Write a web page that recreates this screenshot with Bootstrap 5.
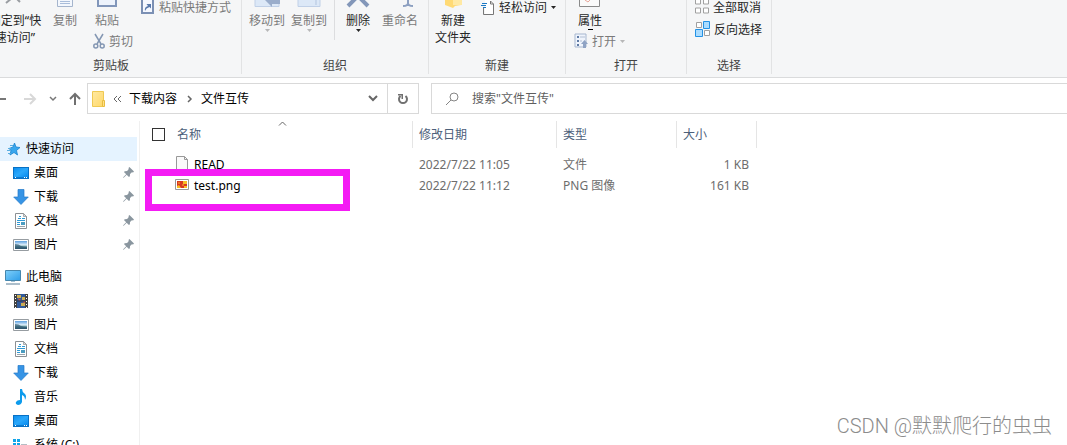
<!DOCTYPE html>
<html lang="zh-CN">
<head>
<meta charset="utf-8">
<meta name="viewport" content="width=device-width, initial-scale=1">
<title>文件互传</title>
<link href="https://cdn.jsdelivr.net/npm/bootstrap@5.3.0/dist/css/bootstrap.min.css" rel="stylesheet">
<script defer src="https://cdn.jsdelivr.net/npm/bootstrap@5.3.0/dist/js/bootstrap.bundle.min.js"></script>
<style>
  body { font: 12px/17px "Noto Sans", "Noto Sans CJK SC", sans-serif; color: #000; background: #fff; }
  svg { display: block; flex: none; }
  button { font: inherit; color: inherit; background: none; border: 0; padding: 0; white-space: nowrap; }
  .ribbon { background: #f5f6f7; border-bottom: 1px solid #dadbdc; height: 78px; color: #262626; overflow: hidden; }
  .group { height: 74px; border-right: 1px solid #e2e3e4; }
  .group-body { height: 56px; }
  .group-name { line-height: 20px; color: #444; text-align: center; }
  .off { color: #7a7a7a; }
  .big { display: flex; flex-direction: column; align-items: center; }
  .big > svg:first-child { height: 12px; }
  .line { display: flex; align-items: center; gap: 4px; height: 22px; }
  .line-top { height: 14px; }
  .line-low { margin-top: 1px; }
  .g-clip { width: 262px; margin-left: -20px; padding-left: 5px; }
  .g-clip .group-name { padding-right: 4px; }
  .g-org { width: 187px; }
  .g-new { width: 137px; }
  .g-open { width: 121px; }
  .g-sel { width: 85px; }
  .w-pin { width: 60px; }
  .w-std { width: 40px; }
  .w-cut { width: 44px; }
  .w-prop { width: 32px; }
  .w-col { width: 56px; }
  .w-org { width: 42px; }
  .w-new { width: 48px; }
  .w-ren { width: 44px; }
  .rule { width: 1px; height: 40px; background: #dcdddf; margin: 0 3px 0 4px; }
  .navrow { height: 43px; padding-top: 5px; }
  .navbtns { width: 87px; height: 31px; }
  .address { width: 332px; height: 31px; border: 1px solid #d9d9d9; }
  .address a { color: #000; text-decoration: none; }
  .reload { width: 31px; border-left: 1px solid #d9d9d9; }
  .search { height: 31px; border: 1px solid #d9d9d9; border-right: 0; margin-left: 12px; padding-left: 14px; gap: 13px; }
  .search input { border: 0; outline: 0; padding: 0; font: inherit; color: #5f5f5f; }
  .search input::placeholder { color: #5f5f5f; opacity: 1; }
  .side { width: 140px; border-right: 1px solid #f0f0f0; padding-top: 16px; }
  .side a { display: flex; align-items: center; height: 24px; width: 137px; padding: 0 3px 1px 0; color: #000; text-decoration: none; white-space: nowrap; }
  .side .root { padding-left: 5px; gap: 5px; }
  .side .leaf { padding-left: 13px; gap: 5px; }
  .side .chosen { background: #e5f3ff; }
  .side .pc { margin-top: 8px; }
  .files { width: 617px; table-layout: fixed; border-collapse: separate; border-spacing: 0; }
  .files th { height: 27px; padding: 0 6px; font-weight: 400; color: #4c607a; border-right: 1px solid #e5e5e5; position: relative; }
  .files td { height: 22px; padding: 0 6px; color: #6d6d6d; }
  .files tr:last-child td { padding-bottom: 2px; }
  .files td:last-child { padding-right: 8px; }
  .files .fname { color: #000; padding-left: 35px; }
  .files th:first-child { padding-left: 12px; }
  .files tbody::before { content: ""; display: block; height: 5px; }
  .c-name { width: 273px; } .c-date { width: 144px; } .c-type { width: 120px; } .c-size { width: 80px; }
  .tick { appearance: none; width: 13px; height: 13px; border: 1px solid #333; margin: 0 12px 0 0; background: #fff; }
  .sort { position: absolute; left: 138px; top: 0; }
  .frame { left: 5px; top: 48px; width: 205px; height: 42px; border: 7px solid #f41bf4; }
  .credit { right: 15px; bottom: 4px; font: 300 20px/30px Roboto, "Noto Sans CJK SC", sans-serif; color: #8c8c8c; }
</style>
</head>
<body class="vh-100 overflow-hidden d-flex flex-column">
<svg class="position-absolute" width="0" height="0" aria-hidden="true">
  <defs>
    <linearGradient id="blue" x1="0" y1="0" x2="1" y2="1"><stop stop-color="#0d8ff0"/><stop offset=".5" stop-color="#2ba8fb"/><stop offset="1" stop-color="#078bef"/></linearGradient>
    <linearGradient id="screen" x1="0" y1="0" x2="1" y2="1"><stop stop-color="#7fd0fb"/><stop offset="1" stop-color="#2e9de8"/></linearGradient>
    <linearGradient id="sky" x1="0" y1="0" x2="0" y2="1"><stop stop-color="#5b9fdf"/><stop offset=".5" stop-color="#e4f2fb"/><stop offset=".65" stop-color="#6fa0a8"/><stop offset="1" stop-color="#243f5d"/></linearGradient>
    <linearGradient id="gold" x1="0" y1="0" x2="1" y2="1"><stop stop-color="#ffe9a2"/><stop offset="1" stop-color="#ffd869"/></linearGradient>
    <symbol id="desk" viewBox="0 0 16 16"><path fill="#0871c5" d="M0 2h16v12H0z"/><path fill="url(#blue)" d="M1 3h14v9H1z"/><path fill="#0b7ad0" d="M1 12h14v1H1z"/><path fill="#fff" d="M2 12h1v1H2zm9 0h1v1h-1zm2 0h1v1h-1z"/></symbol>
    <symbol id="down" viewBox="0 0 16 16"><path fill="#3694e5" stroke="#2379c9" stroke-width=".7" d="M5 .5h6V8h4.300L8 15.500.700 8H5z"/></symbol>
    <symbol id="doc" viewBox="0 0 16 16"><path fill="#fff" stroke="#8b9094" d="M2.500.5h8l3 3v12h-11z"/><path fill="#ddd" stroke="#8b9094" stroke-width=".7" d="M10.500.5v3h3z"/><path fill="#309ad5" d="M6 3h2v1H6zM5 5h3v1H5zm4 0h3v1H9zM4 7h8v1H4zM4 9h3v1H4zM4 11h3v1H4z"/><path fill="#9aa5ad" d="M4 13h8v1H4z"/><path fill="#4b9cc0" d="M8 9h4v3H8z"/></symbol>
    <symbol id="pic" viewBox="0 0 16 16"><path fill="#fff" stroke="#969ca1" d="M.5 2.500h15v11H.5z"/><path fill="url(#sky)" d="M2 4h12v8H2z"/><path fill="#2f5a70" d="M2 7q4 0 6 2 3 1 6 1v2H2z" opacity=".7"/></symbol>
    <symbol id="tack" viewBox="0 0 12 12"><path fill="#8a969f" d="M7 0l5 5-1 1-1.300-.3L7.700 7.500 7.500 10 6.500 11 4 8.500 1 11.500 0 12l.5-1L3.500 8 1 5.500l1-1 2.500-.2L6.300 2.300 6 1z"/></symbol>
    <symbol id="tri" viewBox="0 0 5 3"><path fill="currentColor" d="M0 0h5L2.500 3z"/></symbol>
  </defs>
</svg>

<header class="ribbon d-flex flex-shrink-0">
  <section class="group g-clip flex-shrink-0">
    <div class="group-body d-flex align-items-start">
      <button class="big w-pin"><svg width="32" height="12"><path d="M7 3l6-5M17-2l4 4" stroke="#999da2" stroke-width="2"/></svg>固定到“快<br>速访问”</button>
      <button class="big w-std off"><svg width="18" height="12"><path d="M1.500-4h15V6.500h-15z" fill="#f3f7fd" stroke="#a5b5cd"/><path d="M4 1.500h10M4 3.500h10" stroke="#a9bdda"/></svg>复制</button>
      <div class="w-col">
        <button class="big w-cut off"><svg width="22" height="12"><path d="M2-4h18V6H2z" fill="#edf3fc" stroke="#8196ba" stroke-width="2"/></svg>粘贴</button>
        <button class="line line-low off ps-2"><svg width="12" height="16"><g fill="none" stroke="#8497b3" stroke-width="1.500"><path d="M2 1l6 10M10 1L4 11"/><circle cx="2.800" cy="13" r="2"/><circle cx="9.200" cy="13" r="2"/></g></svg>剪切</button>
      </div>
      <button class="line line-top off"><svg width="14" height="14" viewBox="0 0 14 14"><path d="M1-2h11v15H1z" fill="#f5f8ff" stroke="#7b90b4" stroke-width="2"/><path d="M4 11q-1-4 3-5L5.500 4H10v4.500L8.500 7Q5 8 4 11" fill="#5979ab"/></svg>粘贴快捷方式</button>
    </div>
    <div class="group-name">剪贴板</div>
  </section>
  <section class="group g-org flex-shrink-0">
    <div class="group-body d-flex align-items-start ps-1">
      <button class="big w-org off"><svg width="28" height="12"><path d="M2-4h24V6.500H2z" fill="#dce8f7" stroke="#c0d0e7"/><path d="M10-2l9 9V4h8V-1H12" fill="#9aadcb"/></svg>移动到<svg class="opacity-50" width="5" height="3"><use href="#tri"/></svg></button>
      <button class="big w-org off"><svg width="24" height="12"><path d="M1-4h22V6.500H1z" fill="#dce8f7" stroke="#c0d0e7"/><path d="M19 0v5" stroke="#b3c5df"/></svg>复制到<svg class="opacity-50" width="5" height="3"><use href="#tri"/></svg></button>
      <div class="rule"></div>
      <button class="big w-std"><svg width="28" height="12"><path d="M4 6L14-4 24 6" fill="none" stroke="#8397b9" stroke-width="4"/></svg>删除<svg width="5" height="3"><use href="#tri"/></svg></button>
      <button class="big w-ren off"><svg class="ms-3" width="12" height="12"><path d="M6-1v4M1 6q5 0 5-3 0 3 5 3" fill="none" stroke="#8da0c1" stroke-width="2"/></svg>重命名</button>
    </div>
    <div class="group-name">组织</div>
  </section>
  <section class="group g-new flex-shrink-0">
    <div class="group-body d-flex align-items-start">
      <button class="big w-new"><svg width="24" height="12"><path d="M4-4h16V5l-6 1-2 2-8-3z" fill="#ffda75"/><path d="M12 0h9v5h-9z" fill="#ffe9a4"/></svg>新建<br>文件夹</button>
      <button class="line line-top ms-1"><svg width="14" height="15" viewBox="2 0 14 15"><path d="M6 0h6l3 3v11H6z" fill="#fff"/><path d="M4.500 8v6.500h10V4l-3-3" fill="none" stroke="#777"/><path d="M11.500 1v3h3" fill="none" stroke="#777"/><path d="M3 3.500h5M2 5.500h5M4 7.500h3" stroke="#1b79c5"/></svg>轻松访问<svg width="5" height="3"><use href="#tri"/></svg></button>
    </div>
    <div class="group-name">新建</div>
  </section>
  <section class="group g-open flex-shrink-0">
    <div class="group-body ps-2">
      <button class="big w-prop"><svg width="22" height="12"><path d="M.5-4h20V6.500H.5z" fill="#fafafa" stroke="#8a8a8a"/><path d="M6 0l3 2 2-2" fill="none" stroke="#e8a79a"/></svg>属性<svg width="5" height="1"><path d="M0 0h5v1H0z"/></svg></button>
      <button class="line off"><svg width="14" height="16"><path d="M1 1h11v13H1z" fill="#eff4fc" stroke="#a7b7cf"/><path d="M3 3h2v2H3zm0 4h2v2H3zm0 4h2v2H3z" fill="#607ba5"/><path d="M6 4h5M6 8h2" stroke="#b2bfd3"/><path d="M10.500 7l3.500 4h-2v4H9v-4H7z" fill="#8fa3c4"/></svg>打开<svg class="opacity-50" width="5" height="3"><use href="#tri"/></svg></button>
    </div>
    <div class="group-name">打开</div>
  </section>
  <section class="group g-sel flex-shrink-0">
    <div class="group-body ps-2">
      <button class="line line-top"><svg width="14" height="14" viewBox="0 0 14 14"><path d="M.5-1h5v5h-5zm8 0h5v5h-5zm-8 9h5v5h-5zm8 0h5v5h-5z" fill="#fff" stroke="#a0a0a0"/></svg>全部取消</button>
      <button class="line mt-1"><svg width="15" height="16" viewBox="0 0 15 16"><path d="M1.500 1.500h5v5h-5zm8 8h5v5h-5z" fill="#fff" stroke="#a0a0a0"/><path d="M8.500.5h6v7h-6zm-8 8h7v7h-7z" fill="#aadcff" stroke="#2492e4"/></svg>反向选择</button>
    </div>
    <div class="group-name">选择</div>
  </section>
</header>

<nav class="navrow d-flex flex-shrink-0">
  <div class="navbtns d-flex align-items-center flex-shrink-0">
    <button aria-label="后退"><svg width="7" height="14"><path d="M0 7h6" stroke="#777" stroke-width="2"/></svg></button>
    <button aria-label="前进" class="ms-3"><svg width="14" height="14" fill="none"><path d="M1 7h11M7 2l5 5-5 5" stroke="#d8d8d8" stroke-width="2"/></svg></button>
    <button aria-label="最近位置" class="ms-2 ps-1"><svg width="8" height="8" fill="none"><path d="M1 2l3 3 3-3" stroke="#777" stroke-width="1.500"/></svg></button>
    <button aria-label="上移" class="ms-2 ps-1"><svg width="12" height="14" fill="none"><path d="M6 13V2M1 7l5-5 5 5" stroke="#707070" stroke-width="2"/></svg></button>
  </div>
  <div class="address d-flex align-items-center flex-shrink-0 ps-1">
    <svg width="13" height="16"><path d="M.5.5h11v15H.5z" fill="url(#gold)" stroke="#efc953"/><path d="M10.500 9.500h2v6h-2z" fill="#ffe08a" stroke="#e8bd3f"/></svg>
    <svg class="ms-2" width="8" height="8" fill="none"><path d="M4 1L1 4l3 3M8 1L5 4l3 3" stroke="#666"/></svg>
    <a href="#" class="ms-2">下载内容</a>
    <svg class="ms-2" width="8" height="8" fill="none"><path d="M3 1l3 3-3 3" stroke="#666" stroke-width="1.500"/></svg>
    <a href="#" class="ms-2">文件互传</a>
    <button aria-label="历史" class="ms-auto me-2"><svg width="12" height="8" fill="none"><path d="M2 1l4 4 4-4" stroke="#666" stroke-width="2"/></svg></button>
    <button aria-label="刷新" class="reload h-100 d-flex align-items-center justify-content-center"><svg width="12" height="12" fill="none"><path d="M8.500 3a4 4 0 1 1-5 0" stroke="#707070" stroke-width="2"/><path d="M1 1h5v5H4.500V2.500H1z" fill="#707070"/></svg></button>
  </div>
  <label class="search d-flex align-items-center flex-grow-1">
    <svg width="13" height="13" fill="none" stroke="#858585"><circle cx="8" cy="5" r="4"/><path d="M5 8l-5 5"/></svg>
    <input type="text" class="flex-grow-1" placeholder='搜索"文件互传"' aria-label="搜索">
  </label>
</nav>

<main class="d-flex flex-grow-1 overflow-hidden">
  <aside class="side flex-shrink-0">
    <a href="#" class="root chosen"><svg width="16" height="16"><path d="M9.500 2l1.500 4 4 .5-3.500 3 1 4.500-3.500-2.500L5 14l1-4.500-2-2 4-1.500z" fill="#38a7ee" stroke="#1681cf" stroke-width=".8"/><path d="M5 4.500h3M3 7.500h3M2 9.500h4M3 12.500h3" stroke="#5aaee1"/></svg>快速访问</a>
    <a href="#" class="leaf"><svg width="16" height="16"><use href="#desk"/></svg>桌面<svg class="ms-auto" width="11" height="11"><use href="#tack"/></svg></a>
    <a href="#" class="leaf"><svg width="16" height="16"><use href="#down"/></svg>下载<svg class="ms-auto" width="11" height="11"><use href="#tack"/></svg></a>
    <a href="#" class="leaf"><svg width="16" height="16"><use href="#doc"/></svg>文档<svg class="ms-auto" width="11" height="11"><use href="#tack"/></svg></a>
    <a href="#" class="leaf"><svg width="16" height="16"><use href="#pic"/></svg>图片<svg class="ms-auto" width="11" height="11"><use href="#tack"/></svg></a>
    <a href="#" class="root pc"><svg width="16" height="16"><path d="M.5 1.500h15v10H.5z" fill="url(#screen)" stroke="#4586ad"/><path d="M6 12h4v1H6z" fill="#a5c4d8"/><path d="M1 15h14" stroke="#91a8ba" stroke-width="1.500"/></svg>此电脑</a>
    <a href="#" class="leaf"><svg width="16" height="16"><path d="M1 1h14v14H1z" fill="#424242"/><path d="M4 1h8v14H4z" fill="#315a9a"/><path d="M4 2h4v3H4zm5 2h3v3H9zm-1 6h4v3H8z" fill="#c9ad55"/><path d="M5 5l3 2-2 1zM9 9l3-1v2z" fill="#df5a38"/><path d="M2.500 2v13M13.500 2v13" stroke="#fff" stroke-dasharray="1 2"/><path d="M4 8h8" stroke="#26354d"/></svg>视频</a>
    <a href="#" class="leaf"><svg width="16" height="16"><use href="#pic"/></svg>图片</a>
    <a href="#" class="leaf"><svg width="16" height="16"><use href="#doc"/></svg>文档</a>
    <a href="#" class="leaf"><svg width="16" height="16"><use href="#down"/></svg>下载</a>
    <a href="#" class="leaf"><svg width="16" height="16"><path d="M7 0h2q0 3 3 5 2 2 0 6 0-4-3-5v7q-1 3-4 3-3-1-2-3 1-2 4-2z" fill="#0d9bec"/></svg>音乐</a>
    <a href="#" class="leaf"><svg width="16" height="16"><use href="#desk"/></svg>桌面</a>
    <a href="#" class="leaf"><svg width="16" height="16"><path d="M0 2h3v3H0zm4 0h3v3H4zM0 6h3v3H0zm4 0h3v3H4z" fill="#12a5e9"/><path d="M8 7h6v3H8zM0 10h15v3H0z" fill="#b5bdc4"/></svg>系统 (C:)</a>
  </aside>
  <section class="position-relative flex-grow-1">
    <table class="files">
      <thead><tr>
        <th class="c-name"><div class="d-flex align-items-center"><input type="checkbox" class="tick" aria-label="全选">名称</div><svg class="sort" width="9" height="5" fill="none"><path d="M1 4.500l3.500-3.500L8 4.500" stroke="#666"/></svg></th>
        <th class="c-date">修改日期</th><th class="c-type">类型</th><th class="c-size">大小</th>
      </tr></thead>
      <tbody>
        <tr><td class="fname"><div class="d-flex align-items-center gap-1"><svg width="15" height="16"><path d="M1.500.5h8l3 3v12h-11z" fill="#fafafa" stroke="#999"/><path d="M9.500.5v3h3" fill="none" stroke="#999"/></svg>READ</div></td><td>2022/7/22 11:05</td><td>文件</td><td class="text-end">1 KB</td></tr>
        <tr><td class="fname"><div class="d-flex align-items-center gap-1"><svg width="15" height="14"><path d="M.5 1.500h13v10H.5z" fill="#fff" stroke="#999"/><path d="M2 3h10v7H2z" fill="#d83820"/><path d="M8 3h4v3H8zM2 8l2-1 2 3H2zm7 0h3v2H9z" fill="#f9bd23"/><path d="M3 4h2v2H3zm4 2h2v2H7z" fill="#ec7721"/></svg>test.png</div></td><td>2022/7/22 11:12</td><td>PNG 图像</td><td class="text-end">161 KB</td></tr>
      </tbody>
    </table>
    <div class="frame position-absolute"></div>
  </section>
</main>
<div class="credit position-absolute">CSDN @默默爬行的虫虫</div>
</body>
</html>
